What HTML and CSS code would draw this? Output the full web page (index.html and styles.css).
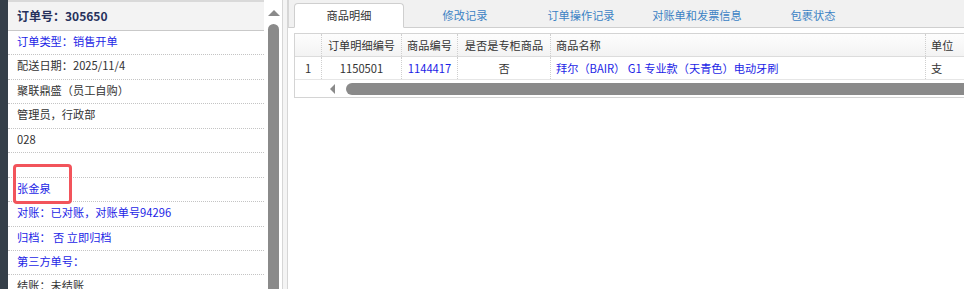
FILE: index.html
```html
<!DOCTYPE html>
<html lang="zh-CN">
<head>
<meta charset="utf-8">
<title>订单详情</title>
<link rel="stylesheet" href="styles.css">
</head>
<body>
<div class="app">
  <div class="edge"></div>
  <div class="info">
    <div class="info-head">订单号：305650</div>
    <div class="row blue">订单类型：销售开单</div>
    <div class="row">配送日期：2025/11/4</div>
    <div class="row">聚联鼎盛（员工自购）</div>
    <div class="row">管理员，行政部</div>
    <div class="row">028</div>
    <div class="row"></div>
    <div class="row blue">张金泉</div>
    <div class="row blue">对账：已对账，对账单号94296</div>
    <div class="row blue">归档： 否 立即归档</div>
    <div class="row blue">第三方单号：</div>
    <div class="row">结账：未结账</div>
    <div class="mark"></div>
  </div>
  <div class="vscroll">
    <div class="arrow-up"></div>
    <div class="vthumb"></div>
  </div>
  <div class="splitter"></div>
  <div class="main">
    <div class="tabs">
      <div class="tab active">商品明细</div>
      <div class="tab">修改记录</div>
      <div class="tab">订单操作记录</div>
      <div class="tab">对账单和发票信息</div>
      <div class="tab">包裹状态</div>
    </div>
    <div class="grid">
      <div class="grow head">
        <div class="c c0"></div>
        <div class="c c1">订单明细编号</div>
        <div class="c c2">商品编号</div>
        <div class="c c3">是否是专柜商品</div>
        <div class="c c4 left">商品名称</div>
        <div class="c c5 left">单位</div>
      </div>
      <div class="grow">
        <div class="c c0">1</div>
        <div class="c c1">1150501</div>
        <div class="c c2 link">1144417</div>
        <div class="c c3">否</div>
        <div class="c c4 left link">拜尔（BAIR） G1 专业款（天青色）电动牙刷</div>
        <div class="c c5 left">支</div>
      </div>
      <div class="hscroll">
        <div class="arrow-left"></div>
        <div class="hthumb"></div>
      </div>
    </div>
  </div>
</div>
</body>
</html>
```

FILE: styles.css
```css
* { box-sizing: border-box; }
html, body { margin: 0; padding: 0; }
body {
  width: 964px;
  height: 289px;
  overflow: hidden;
  background: #fff;
  font-family: "Noto Sans CJK SC", "Microsoft YaHei", sans-serif;
  font-size: 11.2px;
  color: #333;
}
.app { display: flex; height: 289px; }
.edge { width: 8px; background: #353f49; flex: none; }
.info {
  position: relative;
  width: 256px;
  flex: none;
  border-top: 2px solid #d9d9d9;
  overflow: hidden;
}
.info-head {
  height: 29px;
  line-height: 27px;
  padding-left: 9px;
  background: #f3f3f3;
  border-bottom: 1px solid #c9c9c9;
  font-size: 12px;
  font-weight: bold;
  color: #26315c;
}
.row {
  height: 24.44px;
  line-height: 21px;
  padding-left: 9px;
  border-bottom: 1px dotted #c4c4c4;
  white-space: nowrap;
}
.blue { color: #1c1ee6; }
.mark {
  position: absolute;
  left: 5px;
  top: 162px;
  width: 59px;
  height: 40px;
  border: 3px solid #f2545b;
  border-radius: 4px;
}
.vscroll {
  width: 18px;
  flex: none;
  background: #fff;
  padding-left: 4px;
  padding-top: 10px;
}
.arrow-up {
  width: 0; height: 0;
  border-left: 6px solid transparent;
  border-right: 6px solid transparent;
  border-bottom: 6px solid #8a8a8a;
}
.vthumb {
  margin-top: 8px;
  width: 11px;
  height: 280px;
  background: #8a8a8a;
  border-radius: 6px 6px 0 0;
}
.splitter {
  width: 6px;
  flex: none;
  background: #f4f4f4;
  border-left: 1px solid #d6d6d6;
  border-right: 1px solid #d6d6d6;
}
.main { flex: 1; min-width: 0; overflow: hidden; }
.tabs {
  height: 28px;
  display: flex;
  gap: 6px;
  align-items: flex-end;
  padding-left: 5px;
  background: #f1f1f1;
  border-bottom: 1px solid #cfcfcf;
  border-left: 1px solid #d6d6d6;
}
.tab {
  width: 110px;
  flex: none;
  height: 24px;
  line-height: 22px;
  text-align: center;
  color: #3b82c4;
  margin-bottom: -1px;
}
.tab.active {
  background: #fff;
  color: #333;
  border: 1px solid #cfcfcf;
  border-bottom: 1px solid #fff;
  border-radius: 4px 4px 0 0;
  height: 25px;
}
.grid {
  margin: 5px 0 0 6px;
  width: 700px;
  border: 1px solid #d4d4d4;
}
.grow { display: flex; height: 23px; border-bottom: 1px solid #e6e6e6; }
.grow.head { background: linear-gradient(#fdfdfd, #f3f3f3); border-bottom: 1px solid #dcdcdc; }
.c {
  flex: none;
  line-height: 22px;
  text-align: center;
  border-right: 1px dotted #cfcfcf;
  white-space: nowrap;
  overflow: hidden;
}
.c.left { text-align: left; padding-left: 5px; }
.c0 { width: 27px; }
.c1 { width: 80px; }
.c2 { width: 56px; }
.c3 { width: 93px; }
.c4 { width: 375px; }
.c5 { width: 60px; border-right: none; }
.link { color: #1c1ee6; }
.hscroll {
  height: 17px;
  display: flex;
  align-items: center;
  padding-left: 35px;
}
.arrow-left {
  width: 0; height: 0;
  border-top: 5px solid transparent;
  border-bottom: 5px solid transparent;
  border-right: 5px solid #8a8a8a;
}
.hthumb {
  margin-left: 11px;
  flex: 1;
  height: 12px;
  background: #8a8a8a;
  border-radius: 6px 0 0 6px;
}
```
